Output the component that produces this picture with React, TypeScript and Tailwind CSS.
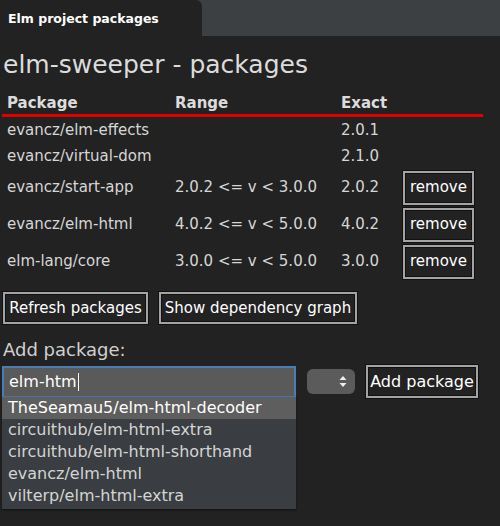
import React from 'react'

const packages = [
  { name: 'evancz/elm-effects', range: '', exact: '2.0.1', removable: false },
  { name: 'evancz/virtual-dom', range: '', exact: '2.1.0', removable: false },
  { name: 'evancz/start-app', range: '2.0.2 <= v < 3.0.0', exact: '2.0.2', removable: true },
  { name: 'evancz/elm-html', range: '4.0.2 <= v < 5.0.0', exact: '4.0.2', removable: true },
  { name: 'elm-lang/core', range: '3.0.0 <= v < 5.0.0', exact: '3.0.0', removable: true },
]

const suggestions = [
  'TheSeamau5/elm-html-decoder',
  'circuithub/elm-html-extra',
  'circuithub/elm-html-shorthand',
  'evancz/elm-html',
  'vilterp/elm-html-extra',
]

function Btn({ children, className = '' }: { children: React.ReactNode; className?: string }) {
  return (
    <button
      className={`bg-[#222] text-white border-2 border-[#a3a3a3] ring-1 ring-[#111] shadow-[inset_0_0_0_1px_#111] flex items-center justify-center ${className}`}
    >
      {children}
    </button>
  )
}

export default function App() {
  return (
    <div
      className="w-[500px] h-[526px] bg-[#222222] text-[#d6d6d6] overflow-hidden"
      style={{ fontFamily: '"DejaVu Sans", Verdana, sans-serif' }}
    >
      {/* Tab bar */}
      <div className="h-[36px] bg-[#3c4043] flex">
        <div className="w-[202px] h-full bg-[#222222] rounded-tr-[6px] flex items-center px-[8px] pt-[2px]">
          <span className="text-[12.5px] font-bold text-white">Elm project packages</span>
        </div>
      </div>

      <div className="px-[2px]">
        <h1 className="h-[55px] pt-[2px] flex items-center pl-[1px] text-[25px] text-[#dcdcdc]">elm-sweeper - packages</h1>

        {/* Packages table */}
        <div className="w-[481px] mt-[2px]">
          <div className="h-[24px] flex items-center border-b-[3px] border-[#e00000] font-bold text-[15px] text-[#dcdcdc]">
            <div className="w-[173px] pl-[5px]">Package</div>
            <div className="w-[166px]">Range</div>
            <div className="w-[62px]">Exact</div>
          </div>
          {packages.map((p) => (
            <div
              key={p.name}
              className={`flex items-center text-[15px] ${p.removable ? 'h-[37px]' : 'h-[26px]'}`}
            >
              <div className="w-[173px] pl-[5px]">{p.name}</div>
              <div className="w-[166px]">{p.range}</div>
              <div className="w-[62px]">{p.exact}</div>
              {p.removable && <Btn className="w-[71px] h-[34px] text-[15px]">remove</Btn>}
            </div>
          ))}
        </div>

        <div className="flex gap-[11px] mt-[12px] pl-[1px]">
          <Btn className="w-[145px] h-[32px] text-[15px]">Refresh packages</Btn>
          <Btn className="w-[198px] h-[32px] text-[15px]">Show dependency graph</Btn>
        </div>

        <div className="mt-[15px] pl-[1px] text-[18px] leading-[22px] text-[#d0d0d0]">Add package:</div>

        <div className="relative flex items-center mt-[4px] h-[33px]">
          <div className="w-[294px] h-[32px] bg-[#5a5a5a] border-2 border-[#4a7db6] flex items-center pl-[5px] text-[16px] text-white">
            elm-htm<span className="w-px h-[18px] bg-white ml-px" />
          </div>
          <div className="ml-[11px] w-[48px] h-[25px] rounded-[6px] bg-[#5b5b5b] flex items-center justify-end pr-[8px]">
            <svg width="8" height="13" viewBox="0 0 8 13">
              <path d="M4 1 L7.5 5 L0.5 5 Z" fill="#eee" />
              <path d="M4 12 L7.5 8 L0.5 8 Z" fill="#eee" />
            </svg>
          </div>
          <Btn className="ml-[11px] w-[112px] h-[33px] text-[16px]">Add package</Btn>

          {/* Autocomplete dropdown */}
          <div className="absolute left-0 top-[32px] w-[294px] bg-[#3a3e42] shadow-[0_1px_2px_#111] pb-[2px]">
            {suggestions.map((s, i) => (
              <div
                key={s}
                className={`h-[22px] flex items-center pl-[6px] text-[16px] ${i === 0 ? 'bg-[#5e5e5e] text-white' : 'text-[#d4d4d4]'}`}
              >
                {s}
              </div>
            ))}
          </div>
        </div>
      </div>
    </div>
  )
}
